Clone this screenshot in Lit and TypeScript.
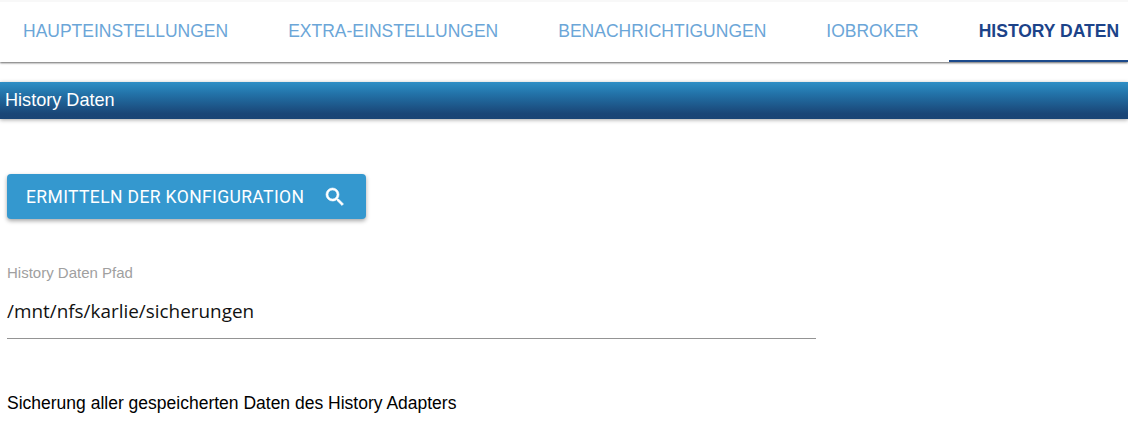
import { LitElement, html, css } from "lit";
import { customElement } from "lit/decorators.js";

const TABS = ["HAUPTEINSTELLUNGEN", "EXTRA-EINSTELLUNGEN", "BENACHRICHTIGUNGEN", "IOBROKER", "HISTORY DATEN"];

@customElement("app-root")
export class AppRoot extends LitElement {
  static styles = css`
    :host { display: block; width: 1128px; height: 430px; overflow: hidden; background: #fff; font-family: "Liberation Sans", Arial, sans-serif; }
    .tabwrap { box-shadow: 0 1px 2px rgba(0,0,0,.6); }
    .tabs { height: 62px; box-sizing: border-box; border-top: 2px solid #f8f8f8; background: #fff; overflow: hidden; }
    .inner { display: flex; margin-left: -7px; }
    .tab { display: flex; align-items: center; height: 60px; box-sizing: border-box; padding: 0 30px 2px; font-size: 17.5px; color: #6ba6d8; flex: none; white-space: nowrap; }
    .tab.active { color: #1c4389; font-weight: 700; border-bottom: 2px solid #1c4a8c; padding-bottom: 0; }
    .bar { margin-top: 20px; height: 37px; display: flex; align-items: center; padding-left: 5px; color: #fff; font-size: 18.1px; background: linear-gradient(#2f8fc6, #2374aa 30%, #1a4677 85%, #1a4475); box-shadow: 0 1px 4px rgba(0,0,0,.35); }
    .content { padding: 55px 7px 0; }
    .btn { display: inline-flex; align-items: center; width: 359px; height: 45px; box-sizing: border-box; padding-left: 19px; border-radius: 4px; background: #3498cf; color: #fff; font-family: Roboto, sans-serif; font-size: 17.5px; letter-spacing: .38px; box-shadow: 0 2px 4px rgba(0,0,0,.35); }
    .btn svg { width: 24px; height: 24px; margin-left: 19px; fill: #fff; stroke: #fff; stroke-width: .6; flex: none; }
    .field { width: 809px; margin-top: 45px; border-bottom: 1px solid #949494; height: 75px; box-sizing: border-box; }
    .label { font-size: 15px; color: #a0a0a0; line-height: 18px; }
    .value { font-family: "Open Sans", sans-serif; font-size: 18.9px; color: #111; margin-top: 15px; line-height: 28px; }
    .note { margin-top: 52px; font-size: 17.5px; color: #000; line-height: 24px; }
  `;
  render() {
    return html`
      <div class="tabwrap">
        <div class="tabs">
          <div class="inner">
            ${TABS.map((t, i) => html`<div class="tab ${i === 4 ? "active" : ""}">${t}</div>`)}
          </div>
        </div>
      </div>
      <div class="bar">History Daten</div>
      <div class="content">
        <div class="btn">ERMITTELN DER KONFIGURATION
          <svg viewBox="0 0 24 24"><path d="M15.5 14h-.79l-.28-.27A6.471 6.471 0 0 0 16 9.5 6.5 6.5 0 1 0 9.5 16c1.61 0 3.09-.59 4.23-1.57l.27.28v.79l5 4.99L20.49 19l-4.99-5zm-6 0C7.01 14 5 11.99 5 9.5S7.01 5 9.5 5 14 7.01 14 9.5 11.99 14 9.5 14z"/></svg>
        </div>
        <div class="field">
          <div class="label">History Daten Pfad</div>
          <div class="value">/mnt/nfs/karlie/sicherungen</div>
        </div>
        <div class="note">Sicherung aller gespeicherten Daten des History Adapters</div>
      </div>
    `;
  }
}
